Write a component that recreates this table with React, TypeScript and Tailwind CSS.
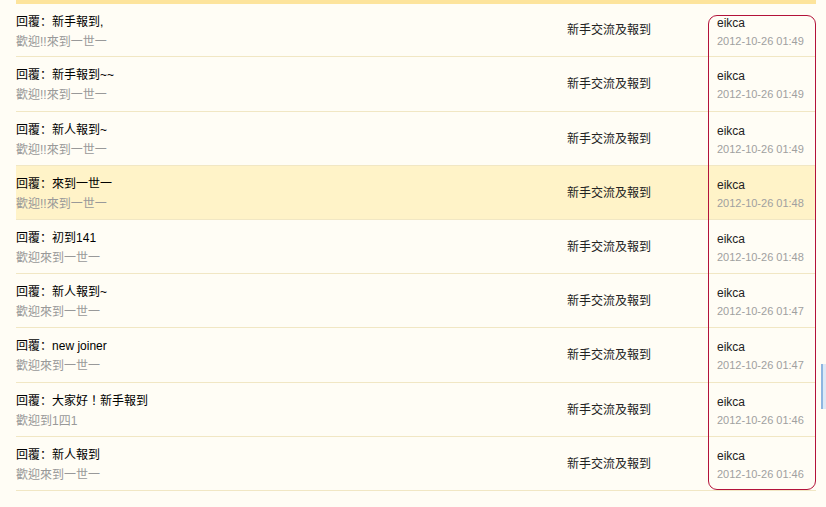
const rows = [
  { title: "新手報到,", sub: "歡迎!!來到一世一", time: "2012-10-26 01:49", h: "h-[53px]" },
  { title: "新手報到~~", sub: "歡迎!!來到一世一", time: "2012-10-26 01:49", h: "h-[55px]" },
  { title: "新人報到~", sub: "歡迎!!來到一世一", time: "2012-10-26 01:49", h: "h-[54px]" },
  { title: "來到一世一", sub: "歡迎!!來到一世一", time: "2012-10-26 01:48", h: "h-[54px]", hot: true },
  { title: "初到141", sub: "歡迎來到一世一", time: "2012-10-26 01:48", h: "h-[54px]" },
  { title: "新人報到~", sub: "歡迎來到一世一", time: "2012-10-26 01:47", h: "h-[54px]" },
  { title: "new joiner", sub: "歡迎來到一世一", time: "2012-10-26 01:47", h: "h-[55px]" },
  { title: "大家好！新手報到", sub: "歡迎到1四1", time: "2012-10-26 01:46", h: "h-[54px]" },
  { title: "新人報到", sub: "歡迎來到一世一", time: "2012-10-26 01:46", h: "h-[54px]" },
];

const font = {
  fontFamily: '"Liberation Sans", "Noto Sans CJK TC", sans-serif',
};

export default function App() {
  return (
    <div className="relative h-[507px] w-[826px] overflow-hidden bg-[#fffdf5]" style={font}>
      <div className="ml-4 w-[800px]">
        {/* top bar */}
        <div className="h-1 bg-[#fde49c]" />

        {rows.map((r, i) => (
          <div
            key={i}
            className={`grid grid-cols-[551px_150px_1fr] border-b border-[#f1e7c4] ${r.h} ${
              r.hot ? "bg-[#fff3c8]" : ""
            }`}
          >
            <div className="pt-[7px]">
              <p className="text-[12px] leading-[20px] text-black">
                回覆<span className="font-['Noto_Sans_CJK_SC']">：</span>
                {r.title}
              </p>
              <p className="text-[12px] leading-[20px] text-[#999]">{r.sub}</p>
            </div>
            <div className="flex items-center text-[12px] text-[#222]">新手交流及報到</div>
            <div className="pt-[10px]">
              <p className="text-[12px] leading-[18px] text-[#222]">eikca</p>
              <p className="text-[11px] leading-[18px] text-[#a0a0a0]">{r.time}</p>
            </div>
          </div>
        ))}
      </div>

      {/* red annotation box */}
      <div className="absolute left-[708px] top-[15px] h-[475px] w-[108px] rounded-[9px] border border-[#b3123a]" />

      {/* scroll marker */}
      <div className="absolute left-[821px] top-[364px] h-[45px] w-[5px] border-l-2 border-[#8fb6e0] bg-[#dde9f6]" />
    </div>
  );
}
